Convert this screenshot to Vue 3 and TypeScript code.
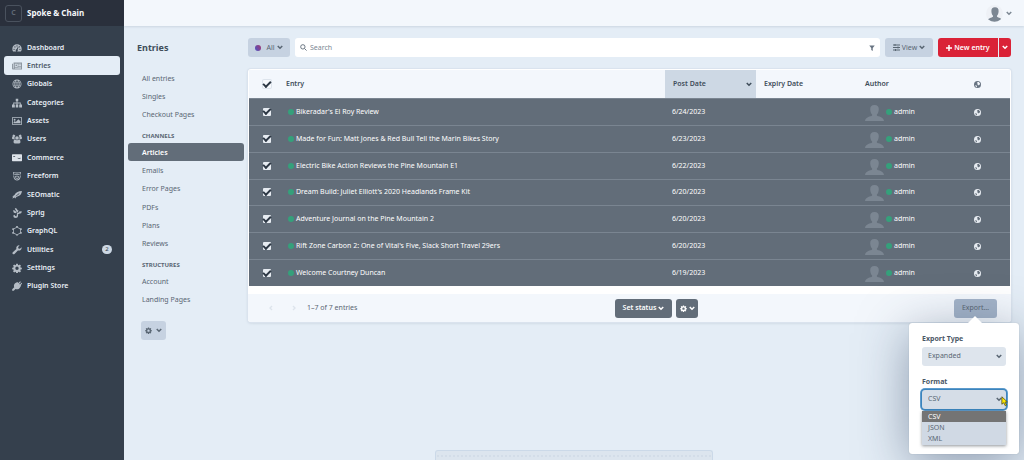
<script setup lang="ts">
import { ref, computed } from 'vue'

interface NavItem {
  label: string
  icon: string
  active?: boolean
  badge?: number
}

interface Entry {
  title: string
  date: string
  selected: boolean
}

const icons: Record<string, string> = {
  gauge:
    'M8 2a7.500 7.500 0 0 0-7.500 7.500c0 1.600.5 3 1.300 4.200h12.400c.8-1.200 1.300-2.600 1.300-4.200A7.500 7.500 0 0 0 8 2zM3.300 11a1 1 0 1 1 0-2 1 1 0 0 1 0 2zM4.700 7.200a1 1 0 1 1 0-2 1 1 0 0 1 0 2zM8 5.700a1 1 0 1 1 0-2 1 1 0 0 1 0 2zm1.300 5.900a1.700 1.700 0 1 1-1.900-1.500L9.600 5.800l1 .3-1.600 4.300c.3.300.4.700.3 1.200zM12.700 11a1 1 0 1 1 0-2 1 1 0 0 1 0 2zm-.8-4a1 1 0 1 1 0-2 1 1 0 0 1 0 2z',
  news:
    'M2.500 2.500H16v11H1.500A1.500 1.500 0 0 1 0 12V4.500h1.500V12h1V2.500zm2 2v4.500h4.500V4.500H4.500zm1 1H8V8H5.500V5.500zM10 4.500v1h4.500v-1H10zm0 2.300v1h4.500v-1H10zM10 9v1h4.500V9H10zm-5.500 1.800v1h10v-1h-10z',
  globe:
    'M8 .8a7.200 7.200 0 1 0 0 14.400A7.200 7.200 0 0 0 8 .8zM7.500 2v2.700H5.600C6.100 3.300 6.800 2.300 7.500 2zm1 0c.7.300 1.400 1.300 1.900 2.700H8.500V2zM5 2.700c-.3.600-.6 1.300-.8 2H2.700C3.300 3.800 4.100 3.100 5 2.700zm6 0c.9.400 1.700 1.100 2.300 2h-1.500c-.2-.7-.5-1.400-.8-2zM2.200 5.700h1.900c-.1.600-.1 1.200-.1 1.800H1.900c0-.6.100-1.200.3-1.800zm3.100 0h2.200v1.800H5.100c0-.6.1-1.200.2-1.800zm3.200 0h2.200c.1.600.2 1.200.2 1.800H8.500V5.700zm3.400 0h1.900c.2.600.3 1.200.3 1.800H12c0-.6 0-1.200-.1-1.800zM1.900 8.500H4c0 .6 0 1.200.1 1.800H2.200c-.2-.6-.3-1.200-.3-1.800zm3.200 0h2.400v1.800H5.300c-.1-.6-.2-1.200-.2-1.800zm3.400 0h2.400c0 .6-.1 1.200-.2 1.800H8.500V8.500zm3.500 0h2.100c0 .6-.1 1.200-.3 1.800h-1.900c.1-.6.1-1.200.1-1.800zm-9.300 2.800h1.500c.2.700.5 1.400.8 2-.9-.4-1.700-1.100-2.300-2zm2.900 0h1.900V14c-.7-.3-1.400-1.300-1.900-2.700zm2.900 0h1.900c-.5 1.400-1.200 2.400-1.900 2.700v-2.700zm3.300 0h1.500c-.6.900-1.400 1.600-2.300 2 .3-.6.6-1.300.8-2z',
  sitemap:
    'M6 1h4v4H8.700v2.300H14v3.200h2V15h-4.500v-4.500h1.200V8.600h-4v1.900H10V15H6v-4.500h1.300V8.600h-4v1.900h1.200V15H0v-4.500h2V7.300h5.300V5H6z',
  image:
    'M0 2h16v12H0V2zm1.300 1.300v9.400h13.400V3.300H1.300zM4.200 4.500a1.500 1.500 0 1 1 0 3 1.500 1.500 0 0 1 0-3zM2.500 11.700V10l2-2 1.500 1.500 4.200-4.300L13.500 8.500v3.200h-11z',
  users:
    'M8 3.500a2.900 2.900 0 1 1 0 5.800 2.900 2.900 0 0 1 0-5.800zM3.300 1a2.200 2.200 0 0 1 2 2.200C4.300 4 3.900 5 4 6.300c.1.800.3 1.300.7 1.900H1.500C.5 8.200 0 7.500 0 6.500c0-1 .2-2 1-2.300A2.200 2.200 0 0 1 3.300 1zm9.400 0A2.200 2.200 0 0 1 15 4.200c.8.300 1 1.300 1 2.300s-.5 1.700-1.500 1.700h-3.200c.4-.6.6-1.100.7-1.900.1-1.300-.3-2.300-1.300-3.100A2.200 2.200 0 0 1 12.700 1zM4.900 8.700c1.800 1.700 4.400 1.700 6.200 0 1.800.3 2.400 2 2.400 4 0 1.500-.7 2.300-2 2.300h-7c-1.300 0-2-.8-2-2.300 0-2 .6-3.700 2.400-4z',
  commerce:
    'M1 2h14a1 1 0 0 1 1 1v9a1 1 0 0 1-1 1H1a1 1 0 0 1-1-1V3a1 1 0 0 1 1-1zm1 3v1.500h3V5H2zm7 2.500v1l2.500 1.200 2.500-1.200v-1l-2.500 1z',
  shield:
    'M1.500 1.500c4.300 1.300 8.700 1.300 13 0l-1 4.500-1.300-.4.500-2.300c-3 .7-6.400.7-9.400 0l.5 3-1.300.4zM4 5.300c2.800-.8 5.500-.7 8.200.2l-.3 1.200c-2.500-.8-5-.9-7.500-.2zM2 7.500l1.300-.2.8 3.400c.8 1.800 2 2.800 3.900 2.800 2.300 0 3.700-1.400 4.300-3.800l.5-2.700 1.300.2-.6 3C12.700 13.200 11 15 8 15c-2.600 0-4.400-1.400-5.200-3.800zM5 8c2-.7 4-.6 6 .2l-.4 2.800c-.6 1-1.500 1.500-2.600 1.500-1.300 0-2.200-.7-2.500-1.900zm1.400 1 .4 1.600c.3.700.7.900 1.200.9.600 0 1-.3 1.300-.8L9.600 9c-1-.3-2.100-.3-3.200 0z',
  rocket:
    'M15.800 1.500c0 3-1.300 5.600-3.800 7.300-1.500 1.100-3.300 1.700-5 2.500l-2.300 2.500.1-1.700L.4 13.500 2 10.800l-1.600-.3L4 8c.7-1.700 2-3.200 4-4.300 2.400-1.400 5-2.200 7.800-2.200zM5.500 9.800l1.200.2L12 5.800l-.8-.8z',
  sprig:
    'M4.500 0 7.300.8 9 3.500l1.600.3L9.300 6.500 7.500 7 6.800 4.600 5.300 2.800zM1.500 3.500l3 .3L7 6.500l-.5 2L3 7.500zM8 7.500l3-.5 1-2 4 .5-1.500 2.800-3 .7-2.300 1.300L9.800 12 9 14.600 6.300 16 3 15l-1-2.500 1.700-1.700 1.300 1.700 1.700 1 .8-1.500z',
  graph:
    'M8 0a1.500 1.500 0 0 1 1.500 1.900l3.600 2.100a1.500 1.500 0 1 1 1.300 2.500v3a1.500 1.500 0 1 1-1.300 2.500l-3.600 2.100a1.500 1.500 0 1 1-3 0L2.900 12a1.500 1.500 0 1 1-1.300-2.500v-3A1.500 1.500 0 1 1 2.900 4l3.600-2.100A1.500 1.500 0 0 1 8 0zM7.200 2.800 3.400 5.100l-.6 1.200v3.400l.6 1.200 3.800 2.300h1.600l3.800-2.300.6-1.200V6.300l-.6-1.200-3.800-2.300z',
  wrench:
    'M15.300 3.500a4.500 4.500 0 0 1-5.900 5.200L4 14.300a1.900 1.900 0 0 1-2.700-2.700l5.700-5.300A4.500 4.500 0 0 1 12.200.6L9.800 3l.4 2.500 2.500.4z',
  cog:
    'M6.700 1h2.600l.4 2 1.100.5 1.700-1.200 1.900 1.900-1.200 1.700.5 1.100 2 .4v2.500l-2 .4-.5 1.100 1.200 1.700-1.900 1.900-1.700-1.200-1.100.5-.4 2H6.700l-.4-2-1.100-.5-1.700 1.200-1.900-1.900 1.200-1.700-.5-1.100-2-.4V7.400l2-.4.500-1.100-1.200-1.700 1.900-1.900 1.700 1.200L6.300 3zM8 5.600a2.700 2.700 0 1 0 0 5.400 2.700 2.700 0 0 0 0-5.400z',
  plug:
    'M10.300 3 13 .5l1.200 1.200L11.500 4.300l1.200 1.200 2.500-2.600 1.200 1.200-2.600 2.700.9.900-1 1c-1.700 4-5 5.500-8.200 4L2.800 15.500H.3v-2.300L3.500 10C2.200 6.500 4 3.500 7.200 2.400l1.200-1z',
}

const nav: NavItem[] = [
  { label: 'Dashboard', icon: 'gauge' },
  { label: 'Entries', icon: 'news', active: true },
  { label: 'Globals', icon: 'globe' },
  { label: 'Categories', icon: 'sitemap' },
  { label: 'Assets', icon: 'image' },
  { label: 'Users', icon: 'users' },
  { label: 'Commerce', icon: 'commerce' },
  { label: 'Freeform', icon: 'shield' },
  { label: 'SEOmatic', icon: 'rocket' },
  { label: 'Sprig', icon: 'sprig' },
  { label: 'GraphQL', icon: 'graph' },
  { label: 'Utilities', icon: 'wrench', badge: 2 },
  { label: 'Settings', icon: 'cog' },
  { label: 'Plugin Store', icon: 'plug' },
]

const sources = [
  { heading: '', items: ['All entries', 'Singles', 'Checkout Pages'] },
  { heading: 'Channels', items: ['Articles', 'Emails', 'Error Pages', 'PDFs', 'Plans', 'Reviews'] },
  { heading: 'Structures', items: ['Account', 'Landing Pages'] },
]
const activeSource = ref('Articles')

const entries = ref<Entry[]>([
  { title: "Bikeradar's El Roy Review", date: '6/24/2023', selected: true },
  { title: 'Made for Fun: Matt Jones & Red Bull Tell the Marin Bikes Story', date: '6/23/2023', selected: true },
  { title: 'Electric Bike Action Reviews the Pine Mountain E1', date: '6/22/2023', selected: true },
  { title: "Dream Build: Juliet Elliott's 2020 Headlands Frame Kit", date: '6/20/2023', selected: true },
  { title: 'Adventure Journal on the Pine Mountain 2', date: '6/20/2023', selected: true },
  { title: "Rift Zone Carbon 2: One of Vital's Five, Slack Short Travel 29ers", date: '6/20/2023', selected: true },
  { title: 'Welcome Courtney Duncan', date: '6/19/2023', selected: true },
])

const allSelected = computed({
  get: () => entries.value.every((e) => e.selected),
  set: (value: boolean) => entries.value.forEach((e) => (e.selected = value)),
})

const search = ref('')
const exportType = ref('Expanded')
const format = ref('CSV')
const formats = ['CSV', 'JSON', 'XML']
</script>

<template>
  <div class="app">
    <aside class="sidebar">
      <a href="#" class="site"><span class="site-icon">C</span>Spoke &amp; Chain</a>
      <nav class="nav" aria-label="Primary">
        <a v-for="item in nav" :key="item.label" href="#" class="nav-link" :class="{ active: item.active }">
          <svg viewBox="0 0 16 16" class="nav-icon" :class="{ bright: item.icon === 'commerce' }" aria-hidden="true"><path :d="icons[item.icon]" fill-rule="evenodd" /></svg>
          <span>{{ item.label }}</span>
          <span v-if="item.badge" class="badge">{{ item.badge }}</span>
        </a>
      </nav>
    </aside>

    <div class="page">
      <header class="topbar">
        <button type="button" class="account" aria-label="My account">
          <span class="account-photo">
            <svg viewBox="0 0 20 18" class="account-avatar" aria-hidden="true"><path d="M10 0c3.200 0 4.700 2 4.500 5-.1 2.500-.9 4.600-2 5.700v1.200c1.300 1.300 7 1.300 7.500 6.100H0c.5-4.800 6.200-4.800 7.500-6.100v-1.200c-1.100-1.100-1.900-3.200-2-5.700C5.300 2 6.800 0 10 0z" /></svg>
          </span>
          <svg viewBox="0 0 8 6" class="chevron" aria-hidden="true"><path d="M1 1l3 3 3-3" /></svg>
        </button>
      </header>

      <div class="body">
        <div class="side">
          <h1>Entries</h1>
          <nav class="sources" aria-label="Sources">
            <template v-for="group in sources" :key="group.heading">
              <h2 v-if="group.heading">{{ group.heading }}</h2>
              <ul :class="'rows-' + group.items.length">
                <li v-for="item in group.items" :key="item">
                  <a href="#" :class="{ selected: item === activeSource }" @click.prevent="activeSource = item">{{ item }}</a>
                </li>
              </ul>
            </template>
          </nav>
          <button type="button" class="btn source-btn" aria-label="Source settings">
            <svg viewBox="0 0 16 16" class="gear" aria-hidden="true"><path :d="icons.cog" fill-rule="evenodd" /></svg>
            <svg viewBox="0 0 8 6" class="chevron" aria-hidden="true"><path d="M1 1l3 3 3-3" /></svg>
          </button>
        </div>

        <main class="content">
          <div class="toolbar">
            <button type="button" class="btn all-btn">
              <span class="status-all"></span>All
              <svg viewBox="0 0 8 6" class="chevron" aria-hidden="true"><path d="M1 1l3 3 3-3" /></svg>
            </button>
            <div class="search">
              <svg viewBox="0 0 16 16" class="search-icon" aria-hidden="true"><circle cx="6.500" cy="6.500" r="5" /><path d="M10.500 10.500l4.500 4.500" /></svg>
              <input v-model="search" type="text" placeholder="Search" aria-label="Search" />
              <button type="button" class="filter" aria-label="Filter">
                <svg viewBox="0 0 12 12" aria-hidden="true"><path d="M.5 1h11L7.500 6v6l-3-2V6z" /></svg>
              </button>
            </div>
            <button type="button" class="btn view-btn">
              <svg viewBox="0 0 14 14" class="sliders" aria-hidden="true"><path d="M0 2h14M0 7h14M0 12h14M4 0v4M10 5v4M5 10v4" /></svg>View
              <svg viewBox="0 0 8 6" class="chevron" aria-hidden="true"><path d="M1 1l3 3 3-3" /></svg>
            </button>
            <div class="new-group">
              <button type="button" class="btn new-btn">
                <svg viewBox="0 0 8 8" class="plus" aria-hidden="true"><path d="M4 0v8M0 4h8" /></svg>New entry
              </button>
              <button type="button" class="btn new-more" aria-label="More entry types">
                <svg viewBox="0 0 8 6" class="chevron" aria-hidden="true"><path d="M1 1l3 3 3-3" /></svg>
              </button>
            </div>
          </div>

          <section class="card">
            <table>
              <thead>
                <tr>
                  <th class="col-check"><input v-model="allSelected" type="checkbox" aria-label="Select all" /></th>
                  <th class="col-entry">Entry</th>
                  <th class="col-post" aria-sort="descending">
                    <button type="button" class="sort">Post Date
                      <svg viewBox="0 0 8 6" class="chevron" aria-hidden="true"><path d="M1 1l3 3 3-3" /></svg>
                    </button>
                  </th>
                  <th class="col-expiry">Expiry Date</th>
                  <th class="col-author">Author</th>
                  <th class="col-link" aria-label="Link">
                    <svg viewBox="0 0 16 16" class="earth" aria-hidden="true"><circle cx="8" cy="8" r="8" /><path d="M8 2.500 11 2l2.500 3 .5 3-2.500.5L10 10 8 8.500 8.500 6 7 5zM2.500 9.500 6 10.500l1 2-1 1.500-2.500-2z" /></svg>
                  </th>
                </tr>
              </thead>
              <tbody>
                <tr v-for="entry in entries" :key="entry.title">
                  <td class="col-check"><input v-model="entry.selected" type="checkbox" :aria-label="'Select ' + entry.title" /></td>
                  <td><a href="#" class="element"><span class="dot"></span>{{ entry.title }}</a></td>
                  <td class="date">{{ entry.date }}</td>
                  <td></td>
                  <td>
                    <a href="#" class="element author">
                      <svg viewBox="0 0 20 18" preserveAspectRatio="none" class="avatar" aria-hidden="true"><path d="M10 0c3.200 0 4.700 2 4.500 5-.1 2.500-.9 4.600-2 5.700v1.200c1.300 1.300 7 1.300 7.500 6.100H0c.5-4.800 6.200-4.800 7.500-6.100v-1.200c-1.100-1.100-1.900-3.200-2-5.700C5.300 2 6.800 0 10 0z" /></svg>
                      <span class="dot"></span>admin
                    </a>
                  </td>
                  <td>
                    <a href="#" class="earth-link" aria-label="Visit webpage">
                      <svg viewBox="0 0 16 16" class="earth light" aria-hidden="true"><circle cx="8" cy="8" r="8" /><path d="M8 2.500 11 2l2.500 3 .5 3-2.500.5L10 10 8 8.500 8.500 6 7 5zM2.500 9.500 6 10.500l1 2-1 1.500-2.500-2z" /></svg>
                    </a>
                  </td>
                </tr>
              </tbody>
            </table>

            <footer class="card-footer">
              <div class="pager">
                <button type="button" class="page-btn" disabled aria-label="Previous page"><svg viewBox="0 0 6 8" aria-hidden="true"><path d="M4.500 1l-3 3 3 3" /></svg></button>
                <button type="button" class="page-btn" disabled aria-label="Next page"><svg viewBox="0 0 6 8" aria-hidden="true"><path d="M1.500 1l3 3-3 3" /></svg></button>
                <span>1–7 of 7 entries</span>
              </div>
              <div class="actions">
                <button type="button" class="btn dark">Set status
                  <svg viewBox="0 0 8 6" class="chevron" aria-hidden="true"><path d="M1 1l3 3 3-3" /></svg>
                </button>
                <button type="button" class="btn dark dark-gear" aria-label="Actions">
                  <svg viewBox="0 0 16 16" class="gear" aria-hidden="true"><path :d="icons.cog" fill-rule="evenodd" /></svg>
                  <svg viewBox="0 0 8 6" class="chevron" aria-hidden="true"><path d="M1 1l3 3 3-3" /></svg>
                </button>
              </div>
              <div class="export">
                <button type="button" class="btn export-btn" aria-expanded="true">Export…</button>
                <div class="popover">
                  <div class="field">
                    <label for="export-type">Export Type</label>
                    <div class="select">
                      <select id="export-type" v-model="exportType">
                        <option>Expanded</option>
                      </select>
                      <svg viewBox="0 0 8 6" class="chevron" aria-hidden="true"><path d="M1 1l3 3 3-3" /></svg>
                    </div>
                  </div>
                  <div class="field">
                    <label for="export-format">Format</label>
                    <div class="select focused">
                      <select id="export-format" v-model="format">
                        <option v-for="f in formats" :key="f">{{ f }}</option>
                      </select>
                      <svg viewBox="0 0 8 6" class="chevron" aria-hidden="true"><path d="M1 1l3 3 3-3" /></svg>
                      <ul class="options" role="listbox" aria-label="Format">
                        <li v-for="f in formats" :key="f" role="option" :aria-selected="f === format" @click="format = f">{{ f }}</li>
                      </ul>
                      <svg viewBox="0 0 10 14" class="pointer" aria-hidden="true"><path d="M1 1l7 6.500-3 .3 2 3.700-1.700.9-1.900-3.800L1 10.500z" /></svg>
                    </div>
                  </div>
                </div>
              </div>
            </footer>
          </section>
        </main>
      </div>
      <div class="drawer"></div>
    </div>
  </div>
</template>

<style>
body {
  background: #e4edf6;
}
</style>

<style scoped>
* {
  box-sizing: border-box;
}
.app {
  display: grid;
  grid-template-columns: 124px minmax(0, 1fr);
  min-height: 100vh;
  font-family: 'Noto Sans', 'Open Sans', sans-serif;
  font-size: 7px;
  line-height: 10px;
  color: #596673;
}
a {
  color: inherit;
  text-decoration: none;
}
ul {
  list-style: none;
  margin: 0;
  padding: 0;
}
button,
input,
select {
  font: inherit;
  color: inherit;
  margin: 0;
}
button {
  border: 0;
  padding: 0;
  background: none;
}
svg {
  display: block;
  flex: none;
}

/* Sidebar */
.sidebar {
  background: #35404d;
  color: #e9eff6;
}
.site {
  display: flex;
  align-items: center;
  gap: 5px;
  height: 26px;
  padding-left: 5px;
  background: #2a303c;
  color: #f5f8fb;
  font-size: 8px;
  font-weight: 700;
}
.site-icon {
  display: grid;
  place-items: center;
  width: 17px;
  height: 17px;
  border: 1px solid #4a525e;
  border-radius: 3px;
  color: #5f6874;
  font-size: 7px;
}
.nav {
  display: grid;
  grid-auto-rows: 1fr;
  height: 257px;
  margin-top: 12px;
  padding: 0 4px;
}
.nav-link {
  display: flex;
  align-items: center;
  gap: 5px;
  padding: 1px 8px 0;
  border-radius: 3px;
  font-weight: 600;
}
.nav-icon {
  width: 10px;
  height: 10px;
  fill: #b4bcc5;
}
.nav-icon.bright {
  fill: #dde3ea;
}
.nav-link.active {
  background: #e4edf6;
  color: #4b5866;
}
.nav-link.active .nav-icon {
  fill: #8b959f;
}
.badge {
  width: 10px;
  height: 9px;
  margin-left: auto;
  border-radius: 5px;
  background: #cdd8e4;
  color: #35404d;
  font-size: 6px;
  font-weight: 400;
  line-height: 9px;
  text-align: center;
}

/* Page frame */
.page {
  display: flex;
  flex-direction: column;
  min-width: 0;
  background: #e4edf6;
}
.topbar {
  display: flex;
  justify-content: flex-end;
  align-items: center;
  height: 26px;
  padding-right: 12px;
  background: #f3f7fc;
  box-shadow: 0 1px 2px rgba(60, 80, 105, 0.14);
}
.account {
  display: flex;
  align-items: center;
  gap: 3px;
  color: #7c8793;
}
.account-photo {
  display: grid;
  place-items: end center;
  width: 17px;
  height: 17px;
  overflow: hidden;
  border-radius: 9px;
  background: #eef1f6;
}
.account-avatar {
  width: 16px;
  height: 15px;
  fill: #7c8793;
}
.chevron {
  width: 6px;
  height: 5px;
  fill: none;
  stroke: currentColor;
  stroke-width: 2;
}
.body {
  display: grid;
  grid-template-columns: 116px minmax(0, 1fr);
  gap: 4px;
  padding: 12px 13px 0 4px;
}

/* Sources */
h1 {
  margin: 0 0 11px 9px;
  font-size: 9px;
  line-height: 20px;
  color: #3f4d5a;
}
h2 {
  margin: 6px 0 0 14px;
  font-size: 6px;
  line-height: 13px;
  font-weight: 700;
  text-transform: uppercase;
}
.sources ul {
  display: grid;
  grid-auto-rows: 1fr;
}
.rows-3 {
  height: 55px;
}
.rows-6 {
  height: 110px;
}
.rows-2 {
  height: 37px;
}
.sources li {
  display: grid;
}
.sources li a {
  display: flex;
  align-items: center;
  padding: 1px 0 0 14px;
  border-radius: 3px;
}
.sources li a.selected {
  background: #626d79;
  color: #fff;
  font-weight: 600;
}
.btn {
  display: flex;
  align-items: center;
  justify-content: center;
  gap: 2px;
  height: 19px;
  border-radius: 3px;
  background: #c6d2e1;
  white-space: nowrap;
}
.source-btn {
  width: 25px;
  gap: 4px;
  margin: 12px 0 0 13px;
}
.gear {
  width: 7px;
  height: 7px;
  fill: currentColor;
}

/* Toolbar */
.toolbar {
  display: flex;
  gap: 5px;
}
.all-btn {
  width: 42px;
}
.status-all {
  width: 6px;
  height: 6px;
  margin-right: 3px;
  border-radius: 3px;
  background: linear-gradient(60deg, #4a55c8, #a3396f);
}
.search {
  display: flex;
  flex: 1;
  align-items: center;
  min-width: 0;
  padding: 0 5px;
  border-radius: 3px;
  background: #fff;
}
.search-icon {
  width: 7px;
  height: 7px;
  fill: none;
  stroke: #596673;
  stroke-width: 2;
}
.search input {
  flex: 1;
  min-width: 0;
  height: 19px;
  padding: 0 3px;
  border: 0;
  outline: 0;
  background: none;
}
.search input::placeholder {
  color: #7b8793;
  opacity: 1;
}
.filter svg {
  width: 6px;
  height: 6px;
  fill: #687482;
}
.view-btn {
  width: 48px;
}
.sliders {
  width: 7px;
  height: 7px;
  fill: none;
  stroke: currentColor;
  stroke-width: 2;
}
.new-group {
  display: flex;
  gap: 1px;
}
.new-btn,
.new-more {
  background: #da2237;
  color: #fff;
  font-weight: 600;
}
.new-btn {
  width: 60px;
  border-radius: 3px 0 0 3px;
}
.new-more {
  width: 12px;
  border-radius: 0 3px 3px 0;
}
.plus {
  width: 6px;
  height: 6px;
  stroke: currentColor;
  stroke-width: 2;
}

/* Entries */
.card {
  margin-top: 12px;
  padding: 1px 1px 0;
  border-radius: 3px;
  background: #fff;
  box-shadow: 0 0 0 1px #dae3ee, 0 1px 3px rgba(60, 80, 105, 0.2);
}
table {
  width: 100%;
  height: 216px;
  table-layout: fixed;
  border-collapse: separate;
  border-spacing: 0;
}
th {
  height: 28px;
  padding: 0 8px;
  background: #f3f7fc;
  color: #3f4d5a;
  font-weight: 600;
  text-align: left;
}
.col-check {
  width: 37px;
  padding: 0 0 0 14px;
}
.col-entry {
  padding: 0;
}
.col-post {
  width: 91px;
  padding-right: 4px;
  background: #cdd8e4;
}
.col-expiry {
  width: 101px;
}
.col-author {
  width: 109px;
}
.col-link {
  width: 44px;
}
.sort {
  display: flex;
  align-items: center;
  justify-content: space-between;
  width: 100%;
}
td {
  padding: 0 8px;
  border-top: 1px solid #7a8591;
  background: #626d79;
  color: #fff;
}
td.col-check {
  padding: 0 0 0 14px;
}
td:nth-child(2) {
  padding: 0 0 0 2px;
}
td.date {
  padding: 0 7px;
}
input[type='checkbox'] {
  display: grid;
  place-items: center;
  appearance: none;
  width: 8px;
  height: 8px;
  border-radius: 1px;
  background: #e6ebf1;
}
th input[type='checkbox'] {
  background: #f7f9fc;
  box-shadow: 0 0 0 1px #dde4ec;
}
input[type='checkbox']:checked::before {
  content: '';
  width: 6px;
  height: 3px;
  margin-bottom: 2px;
  border: solid #2c3744;
  border-width: 0 0 2px 2px;
  rotate: -45deg;
}
.element {
  display: flex;
  align-items: center;
}
.dot {
  flex: none;
  width: 6px;
  height: 6px;
  margin-right: 2px;
  border-radius: 3px;
  background: #35a07b;
}
.avatar {
  width: 19px;
  height: 18px;
  margin-right: 2px;
  padding-top: 2px;
  fill: #7b8692;
}
.earth {
  width: 7px;
  height: 8px;
  padding-top: 1px;
}
.earth circle {
  fill: #687482;
}
.earth path {
  fill: #f3f7fc;
}
.earth.light circle {
  fill: #e6ebf1;
}
.earth.light path {
  fill: #626d79;
}
.card-footer {
  display: grid;
  grid-template-columns: 366px 1fr auto;
  align-items: center;
  height: 28px;
  margin: 8px -1px 0;
  padding: 0 14px 0 1px;
  border-radius: 0 0 3px 3px;
  background: #f3f7fc;
}
.pager {
  display: flex;
  align-items: center;
  padding-left: 20px;
}
.page-btn {
  width: 23px;
}
.page-btn:nth-child(2) {
  width: 15px;
}
.page-btn svg {
  width: 4px;
  height: 6px;
  fill: none;
  stroke: #dde4ec;
  stroke-width: 2;
}
.actions {
  display: flex;
  gap: 4px;
}
.dark {
  width: 57px;
  background: #626d79;
  color: #fff;
  font-weight: 600;
}
.dark-gear {
  width: 22px;
}

/* Export */
.export {
  position: relative;
}
.export-btn {
  width: 43px;
  background: #a3b3c8;
}
.popover {
  position: absolute;
  z-index: 2;
  top: 24px;
  right: -22px;
  width: 110px;
  height: 131px;
  padding: 11px 13px;
  border-radius: 3px;
  background: #fff;
  box-shadow: 0 0 1px rgba(31, 41, 51, 0.3), 0 10px 50px rgba(51, 71, 101, 0.5);
}
.popover::before {
  content: '';
  position: absolute;
  top: -7px;
  right: 36px;
  border: solid transparent;
  border-width: 0 8px 8px;
  border-bottom-color: #fff;
}
.field + .field {
  margin-top: 11px;
}
.field label {
  display: block;
  margin-bottom: 3px;
  color: #4b5866;
  font-weight: 700;
}
.select {
  position: relative;
}
.select select {
  display: block;
  appearance: none;
  width: 100%;
  height: 19px;
  padding: 0 6px;
  border: 0;
  border-radius: 3px;
  outline: 0;
  background: #dee5ed;
}
.select .chevron {
  position: absolute;
  top: 7px;
  right: 4px;
}
.focused select {
  box-shadow: 0 0 0 1px #3b84bd, 0 0 0 2px #5d9bcc;
  background: #d5dde7;
}
.options {
  position: absolute;
  top: 21px;
  left: 0;
  right: 0;
  padding-bottom: 1px;
  background: #d0d9e4;
  box-shadow: 0 1px 3px rgba(31, 41, 51, 0.5);
}
.options li {
  height: 11px;
  padding-left: 6px;
  line-height: 11px;
}
.options li[aria-selected='true'] {
  background: #747474;
  color: #fff;
}
.pointer {
  position: absolute;
  top: 6px;
  right: -3px;
  width: 8px;
  height: 11px;
  fill: #ffea00;
  stroke: #4b4a1a;
  stroke-width: 1;
}

.drawer {
  align-self: center;
  width: 278px;
  height: 10px;
  margin-top: auto;
  border: 1px solid #cbd9e8;
  border-bottom: 0;
  border-radius: 3px 3px 0 0;
  background: radial-gradient(circle at 2px 5px, #d3dde8 1px, transparent 1px) 0 0 / 4px 10px #dce5ee;
}
</style>
